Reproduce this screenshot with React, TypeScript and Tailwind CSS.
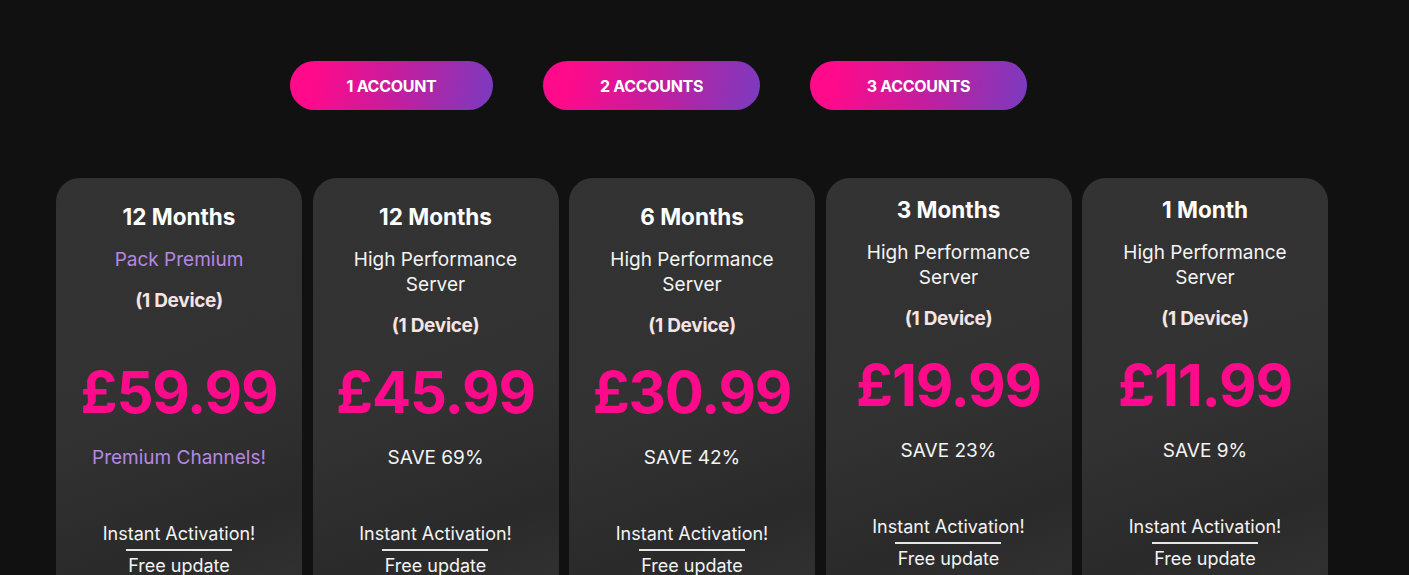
import React from 'react';

interface Plan {
    title: string;
    subtitle: string[];
    price: string;
    note: string;
    premium?: boolean;
    shifted?: boolean;
}

const plans: Plan[] = [
    { title: '12 Months', subtitle: ['Pack Premium'], price: '£59.99', note: 'Premium Channels!', premium: true },
    { title: '12 Months', subtitle: ['High Performance', 'Server'], price: '£45.99', note: 'SAVE 69%' },
    { title: '6 Months', subtitle: ['High Performance', 'Server'], price: '£30.99', note: 'SAVE 42%' },
    { title: '3 Months', subtitle: ['High Performance', 'Server'], price: '£19.99', note: 'SAVE 23%', shifted: true },
    { title: '1 Month', subtitle: ['High Performance', 'Server'], price: '£11.99', note: 'SAVE 9%', shifted: true },
];

const accounts = [
    { label: '1 Account', width: 'w-[203px]' },
    { label: '2 Accounts', width: 'w-[217px]' },
    { label: '3 Accounts', width: 'w-[217px]' },
];

const PlanCard: React.FC<{ plan: Plan }> = ({ plan }) => {
    const accent = plan.premium ? 'text-[#b488e2]' : 'text-[#f4f4f4]';
    return (
        <div
            className={`w-[246px] shrink-0 rounded-[24px] bg-[linear-gradient(160deg,#333333_0%,#323232_45%,#2a2a2a_70%,#303030_82%,#2a2a2a_100%)] flex flex-col items-center text-center pb-10 ${plan.shifted ? 'pt-[18px]' : 'pt-[25px]'}`}
        >
            {/* header */}
            <div className="h-[137px] flex flex-col items-center">
                <h3 className="text-[22.5px] leading-[28px] font-bold text-white">{plan.title}</h3>
                <p className={`mt-[16px] text-[19px] leading-[25px] ${accent}`}>
                    {plan.subtitle.map((line) => (
                        <span key={line} className="block">{line}</span>
                    ))}
                </p>
                <p className="mt-[17px] text-[19px] leading-[24px] font-bold text-[#f6e4e4] tracking-[-0.3px]">(1 Device)</p>
            </div>

            <div className="mt-[22px] text-[58px] leading-[60px] font-bold text-[#ff0a8a] tracking-[-1.2px]">
                {plan.price}
            </div>

            <p className={`mt-[23px] text-[19px] leading-[25px] ${accent}`}>{plan.note}</p>

            {/* features */}
            <ul className="mt-[52px] flex flex-col items-center text-[18px] leading-[24px] text-[#f4f4f4]">
                <li>Instant Activation!</li>
                <li className="mt-[3px] w-[106px] h-[2px] bg-[#e6e6e6]" />
                <li className="mt-[3px]">Free update</li>
                <li className="mt-[4px]">Anti-Freeze Technology</li>
                <li className="mt-[4px]">24/7 Support</li>
            </ul>
        </div>
    );
};

export default function App() {
    return (
        <div className="min-h-screen bg-[#111111] overflow-hidden font-['Inter','Noto_Sans',sans-serif]">
            {/* account switcher */}
            <div className="flex gap-[50px] pl-[290px] pt-[61px]">
                {accounts.map((a) => (
                    <button
                        key={a.label}
                        className={`${a.width} h-[49px] rounded-full bg-[linear-gradient(100deg,#ff0a8a_12%,#c01fa0_55%,#7a3bc0_100%)] text-white text-[16px] font-bold uppercase tracking-[-0.3px]`}
                    >
                        {a.label}
                    </button>
                ))}
            </div>

            {/* plans */}
            <div className="flex items-start gap-[10.5px] pl-[56px] mt-[68px]">
                {plans.map((p, i) => (
                    <PlanCard key={i} plan={p} />
                ))}
            </div>
        </div>
    );
}
